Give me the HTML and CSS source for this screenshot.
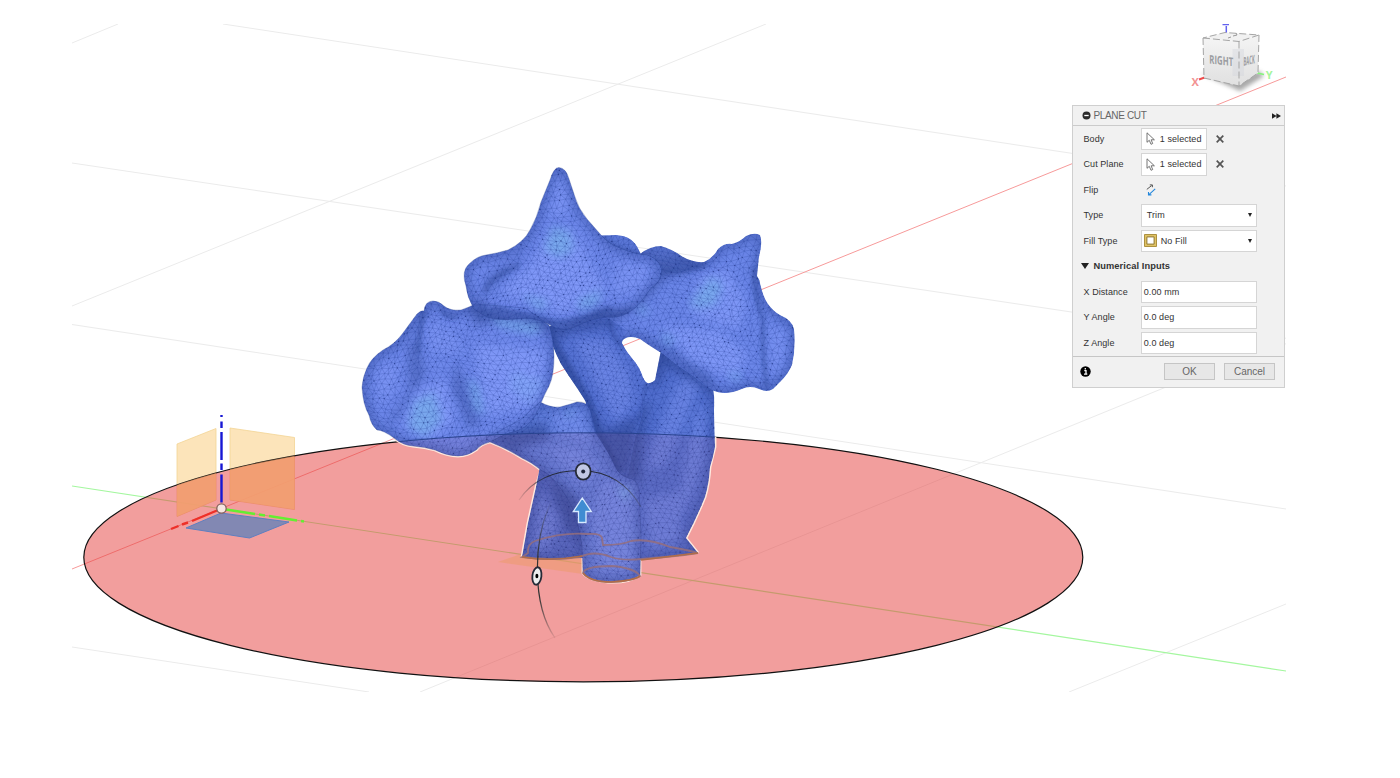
FILE: index.html
```html
<!DOCTYPE html>
<html lang="en">
<head>
<meta charset="utf-8">
<title>Plane Cut</title>
<link rel="stylesheet" href="styles.css">
</head>
<body>
<main class="workspace">
<svg class="scene" viewBox="72 24 1214 668" aria-label="Model viewport">
  <defs>
    <filter id="soft" x="-60%" y="-60%" width="220%" height="220%"><feGaussianBlur stdDeviation="5"/></filter>
    <filter id="glow" x="-80%" y="-80%" width="260%" height="260%"><feGaussianBlur stdDeviation="4"/></filter>
    <filter id="tight" x="-60%" y="-60%" width="220%" height="220%"><feGaussianBlur stdDeviation="2.2"/></filter>
    <path id="back" d="M590 236Q604 235 617 235Q633 236 639 250L642 256L640 290L590 280Z"/>
    <path id="rightTrunk" d="M586 400L645 382Q650 385 655 380L661 350L690 350L712 385Q715 393 714 410L715 447Q713 458 710 467Q709 484 705 497Q696 519 686 538L698 553Q670 557 641 559L575 558Z"/>
    <path id="rightLobe" d="M640 254Q650 246 661 246Q672 249 683 257Q694 263 704 262Q713 258 718 249Q724 243 732 244Q741 241 746 236Q754 232 760 235Q763 242 759 257L757 276Q760 280 760 283Q763 297 768 304Q773 311 780 315Q792 320 794 329Q796 348 792 365Q788 374 782 380L773 389Q767 393 759 389Q750 385 742 389Q726 396 714 391Q704 386 694 377Q678 367 663 354Q648 345 640 339Q628 334 622 341L600 330L590 315L610 270Z"/>
    <path id="centerTrunk" d="M547 327L575 319L605 316L626 330L622 343Q626 351 632 358Q640 367 643 377Q646 384 650 384Q644 393 645 402Q642 420 636 435L628 476L617 473L606 450L596 433L590 410Q584 398 577 388Q568 375 561 364Q551 345 547 327Z"/>
    <path id="rearLeg" d="M540 466L536 487L528 523L522 557Q540 561 563 559Q573 559 583 555L590 500L560 465Z"/>
    <path id="frontLeg" d="M486 438L520 420L540 402Q551 408 560 407Q571 404 577 402Q583 402 586 404L590 410L595 432Q609 452 617 470Q620 475 628 478Q637 479 639 489L641 535L640 575Q629 583 608 582Q588 580 583 573L582 545Q579 526 573 509Q563 488 548 474L541 470Q531 462 522 458Q506 448 490 442Z"/>
    <path id="leftLobe" d="M424 311Q425 301 433 301Q439 301 444 306Q450 311 461 310Q470 307 475 304L525 308L549 325Q554 340 554 356Q554 376 549 386Q543 397 540 406Q532 425 519 430Q505 433 490 442Q481 444 476 450Q468 456 458 456Q447 456 435 450Q425 447 413 446Q402 445 394 438Q383 430 377 430Q371 425 369 415Q363 405 362 387Q363 376 367 368Q371 358 383 350Q395 344 403 333Q411 322 417 314Q421 310 424 311Z"/>
    <path id="topLobe" d="M559 167.500Q566 168 569 179L575 197Q578 208 587 219Q594 227 601 235Q610 245 620 248Q637 255 647 255Q656 258 660 265Q664 275 657 283Q649 289 646 295Q640 303 635 308Q622 319 607 317Q590 319 579 325Q562 334 550 325Q535 316 515 319Q499 321 487 317Q480 313 474 309Q467 297 466 286Q461 271 469 264Q477 256 486 255Q498 253 508 250Q524 242 530 230Q537 218 541 202L550 180Q554 167 559 167.500Z"/>
    <clipPath id="cBack"><use href="#back"/></clipPath><clipPath id="cRt"><use href="#rightTrunk"/></clipPath>
    <clipPath id="cRl"><use href="#rightLobe"/></clipPath><clipPath id="cCt"><use href="#centerTrunk"/></clipPath>
    <clipPath id="cRear"><use href="#rearLeg"/></clipPath><clipPath id="cFl"><use href="#frontLeg"/></clipPath>
    <clipPath id="cLl"><use href="#leftLobe"/></clipPath><clipPath id="cTl"><use href="#topLobe"/></clipPath>
    <clipPath id="body"><use href="#back"/><use href="#rightTrunk"/><use href="#rightLobe"/><use href="#centerTrunk"/><use href="#rearLeg"/><use href="#frontLeg"/><use href="#leftLobe"/><use href="#topLobe"/></clipPath>
    <clipPath id="disc"><ellipse cx="583.300" cy="557.300" rx="499.500" ry="124.500"/></clipPath>
    <linearGradient id="fadeArc" gradientUnits="userSpaceOnUse" x1="519" y1="0" x2="642" y2="0"><stop offset="0" stop-color="#333" stop-opacity=".1"/><stop offset=".25" stop-color="#252b3c"/><stop offset=".7" stop-color="#252b3c"/><stop offset="1" stop-color="#333" stop-opacity=".2"/></linearGradient>
    <linearGradient id="fadeSide" gradientUnits="userSpaceOnUse" x1="0" y1="500" x2="0" y2="638"><stop offset="0" stop-color="#333" stop-opacity="0"/><stop offset=".4" stop-color="#333"/><stop offset=".7" stop-color="#333"/><stop offset="1" stop-color="#333" stop-opacity=".1"/></linearGradient>
    <linearGradient id="cubeFront" x1="0" y1="0" x2="0" y2="1"><stop offset="0" stop-color="#f4f4f4"/><stop offset="1" stop-color="#e0e0e0"/></linearGradient>
  </defs>

  <g class="grid">
    <path d="M72 43L118 24M72 306L766 24M420 692L1286 338M1069 692L1286 604M223 24L1286 186M72 163L1286 344M72 324.500L1286 509M72 647L369 692"/>
  </g>
  <path class="axis-red" d="M72 569L1286 77"/>
  <path class="axis-green" d="M72 486L1286 671"/>
  <path class="origin-plane" d="M177 444L216 428.500V500L177 516.500ZM230 428L294.500 437.500V509.500L230 500Z"/>
  <ellipse class="cut-plane" cx="583.300" cy="557.300" rx="499.500" ry="124.500"/>
  <path class="origin-hatch" clip-path="url(#disc)" d="M177 444L216 428.500V500L177 516.500ZM230 428L294.500 437.500V509.500L230 500Z"/>
  <path class="ground-plane" d="M221 513L289 522L249.500 538L186 528Z"/>
  <g class="triad">
    <path class="triad-blue" d="M221.500 415v2M221.500 421.500v6.500M221.500 432v28M221.500 463.500v6.500M221.500 474.500v28"/>
    <path class="triad-red" d="M217 510.500L192 521M188 522.500L182 524.500M178.500 526L171 529"/>
    <path class="triad-green" d="M226 509.500L255 514M259 514.500L265 515.500M269 516L297 520.500M301 521L304 521.500"/>
    <circle class="origin" cx="221.500" cy="508.500" r="4.700"/>
  </g>
  <path class="cut-hint" d="M498 562L524 553L582 556L583 574Z"/>
  <path class="halo" d="M394 438Q402 445 413 446Q425 447 435 450Q447 456 458 456Q468 456 476 450Q481 444 490 442Q506 448 522 458Q531 462 541 470L536 487L528 523L522 557M583 558V573Q588 580 608 582Q629 583 640 575V560M698 553L686 538Q696 519 705 497Q709 484 710 467L715 447V437"/>

  <g clip-path="url(#cBack)"><use href="#back" fill="#5a76d6"/><path class="crease" d="M600 236Q617 252 650 256"/></g>
  <g clip-path="url(#cRt)">
    <use href="#rightTrunk" fill="#526fcf"/><use href="#rightTrunk" class="edge mild"/>
    <path class="dark" d="M598 425L650 402L644 430L640 485L610 475Z"/>
    <path class="dark" d="M655 345L690 355L720 400L698 386L665 365L655 390Z"/>
    <path class="light faint" d="M680 378L699 384L684 425L666 465L646 470L660 425Z"/>
    <path class="light faint" d="M693 420L705 400L704 460L690 500L675 520Z"/>
    <path class="light faint" d="M645 500L680 490L680 540L650 550Z"/>
  </g>
  <g clip-path="url(#cRl)">
    <use href="#rightLobe" fill="#6b86e8"/><use href="#rightLobe" class="edge"/>
    <path class="dark" d="M640 252L700 260L705 266L665 278L640 305L615 322L590 320Z"/>
    <path class="dark faint" d="M623 330L665 348L715 392L710 375L670 346Z"/>
    <path class="crease" d="M755 267Q753 295 763 320Q762 355 767 388"/>
    <path class="crease" d="M662 271Q686 273 706 263"/>
    <path class="light" d="M700 275L728 270L745 300L740 330L695 318L690 308Z"/><path class="cyan" d="M711 277L723 285L714 306L695 308L690 303Z"/>
    <path class="light" d="M660 325L720 330L748 355L735 380L690 360Z"/>
    <path class="light faint" d="M770 325L787 332L783 365L771 377Z"/>
    <path class="cyan" d="M660 333L676 339L667 346ZM727 374L741 373L738 382ZM637 306L650 309L641 316Z"/>
  </g>
  <g clip-path="url(#cCt)">
    <use href="#centerTrunk" fill="#5672d3"/>
    <path class="crease wide" d="M547 320L550 340L586 401L596 433L617 474"/>
    <path class="dark" d="M545 320L625 315L612 326L570 332L555 345Z"/>
    <path class="light faint" d="M575 340L605 340L627 370L633 400L618 425L597 385Z"/>
    <path class="crease" d="M609 322Q611 335 624 348"/>
    <path class="dark" d="M590 400L605 430L640 415L630 480L607 465Z"/>
    <path class="crease" d="M646 383Q648 400 638 420"/>
  </g>
  <g clip-path="url(#cRear)"><use href="#rearLeg" fill="#5069c5"/><use href="#rearLeg" class="edge mild"/><path class="dark" d="M545 468L581 510L584 550L566 528Z"/><path class="light faint" d="M540 490L560 520L548 552L532 545Z"/></g>
  <g clip-path="url(#cFl)">
    <use href="#frontLeg" fill="#607ddb"/><use href="#frontLeg" class="edge mild"/>
    <path class="dark" d="M485 434L545 422L550 438L515 450L580 500L583 540L552 480Z"/>
    <path class="light faint" d="M602 480L632 485L632 570L600 572L592 520Z"/>
    <path class="light faint" d="M550 412L583 410L592 445L557 435Z"/>
    <path class="light faint" d="M547 445L585 450L600 475L580 485Z"/>
    <path class="cyan" d="M565 412L577 410L568 418ZM616 488L630 489L627 503Z"/>
  </g>
  <g clip-path="url(#cLl)">
    <use href="#leftLobe" fill="#6e88ea"/><use href="#leftLobe" class="edge"/>
    <path class="dark" d="M466 302L480 300L515 312L549 320L549 332L510 319L475 325Z"/>
    <path class="dark faint" d="M423 307L417 340L425 375L398 418L384 428L410 390L408 350Z"/>
    <path class="crease" d="M424 310Q419 331 418 354M457 317Q447 318 440 310"/>
    <path class="dark faint" d="M455 360L466 385L480 422L470 430L452 390Z"/>
    <path class="light" d="M418 390L445 380L455 420L430 440L403 424Z"/><path class="cyan" d="M414 402L434 392L442 420L425 437L408 427Z"/>
    <path class="cyan" d="M468 378L479 385L486 415L475 410ZM512 370L542 381L530 403L509 389ZM490 317L541 325L537 335L500 327Z"/>
    <path class="light" d="M475 345L545 350L538 405L485 415Z"/>
    <path class="light faint" d="M375 370L400 360L395 390L380 405Z"/>
    <path class="light faint" d="M430 320L455 335L460 355L430 350Z"/>
  </g>
  <g clip-path="url(#cTl)">
    <use href="#topLobe" fill="#6e88ea"/><use href="#topLobe" class="edge"/>
    <path class="dark faint" d="M531 240L517 264L492 287L475 310L489 276L515 259Z"/>
    <path class="dark" d="M475 300L500 312L554 328L585 318L600 309L639 309L630 325L550 339L475 318Z"/>
    <path class="crease" d="M520 265Q509 270 501 274Q487 282 485 292M612 308Q583 321 554 323Q530 316 493 308"/>
    <path class="light" d="M551 230L572 230L606 291L565 313L500 293L530 265Z"/><path class="cyan" d="M553 226L570 232L573 250L560 258L544 250ZM578 300L602 290L597 304L580 311ZM521 294L548 302L541 311Z"/>
    <path class="light faint" d="M617 262L650 265L643 290L612 294Z"/>
    <path class="light faint" d="M555 180L564 180L570 210L550 220Z"/>
  </g>
  <g clip-path="url(#body)"><path id="wire" class="wire"/><path id="verts" class="verts"/></g>
  <g class="outlines"><use href="#leftLobe"/><use href="#topLobe"/><use href="#frontLeg"/></g>
  <g clip-path="url(#body)"><ellipse class="plane-over-body" cx="583.300" cy="557.300" rx="499.500" ry="124.500"/></g>

  <path class="section" d="M522 557L528 553Q527 544 535 541Q562 532 588 534Q601 533 602 538L603 545Q622 545 631 541Q648 538 670 547Q688 550 698 553Q671 557 641 559Q623 561 611 557Q594 550 580 557Q552 561 522 557Z"/>
  <path class="section" d="M583 573Q585 566 612 566Q635 568 640 576Q633 581 611 582Q590 582 583 573Z"/>
  <path class="section-base" d="M522 557Q552 562 582 556M583 573Q590 582 611 582Q633 581 640 576M641 560L698 553"/>

  <path class="arc" stroke="url(#fadeArc)" d="M519 500Q539 470 582 470.500Q621 472 641 507"/>
  <path class="arc" stroke="url(#fadeSide)" d="M552 500C532 540 532 605 555 638"/>
  <ellipse class="handle top-handle" cx="583.200" cy="471.500" rx="7.400" ry="8.200"/><circle cx="583.200" cy="471.500" r="2" fill="#20263b"/>
  <ellipse class="handle" cx="536.900" cy="576" rx="4.500" ry="8.800" transform="rotate(7 537 576)"/><ellipse cx="536.900" cy="576" rx="1.500" ry="2.300"/>
  <path class="lift" d="M582.300 498L591.300 511.500H586V522.500H578.500V511.500H573.300Z"/>

  <g class="cube">
    <path class="cube-shadow" d="M1200 73L1240 91L1264 76L1259 71L1238 79Z"/>
    <path class="axis-x" d="M1199 79.500L1206 77"/><path class="axis-y" d="M1257 73L1264 74.500"/><path class="axis-z" d="M1226.300 26V33M1222.500 24.500H1229"/>
    <path d="M1203 38L1239 41.500V86L1204 78Z" fill="url(#cubeFront)"/>
    <path d="M1239 41.500L1259 35L1258 73L1239 86Z" fill="url(#cubeFront)"/>
    <path d="M1203 38L1225 32.500L1259 35L1239 41.500Z" fill="#f1f1f1"/>
    <path d="M1232.500 49H1244V76H1232.500Z" fill="#cfd2da" opacity=".35"/>
    <path class="cube-dash" d="M1203 38L1239 41.500L1259 35L1225 32.500ZM1203 38L1204 78L1239 86L1258 73L1259 35M1239 41.500V86"/>
    <path class="top-mark" d="M1228 38l3-1M1233 36l4-1M1237 35l-1-2"/>
    <text class="cube-text" transform="matrix(1 .11 .01 1 1209.300 63.500)" textLength="24" lengthAdjust="spacingAndGlyphs">RIGHT</text>
    <text class="cube-text" transform="matrix(.8 -.2 0 1 1243.500 66)" textLength="14" lengthAdjust="spacingAndGlyphs">BACK</text>
    <text class="axis-label red" x="1191.500" y="86">X</text><text class="axis-label green" x="1265.700" y="79">Y</text>
  </g>
</svg>

<section class="dialog">
  <header class="dialog-head">
    <svg class="dot" viewBox="0 0 9 9"><circle cx="4.500" cy="4.500" r="4" fill="#2b2b2b"/><path d="M2.300 4.500H6.700" stroke="#fff" stroke-width="1.300"/></svg>
    <span class="title">PLANE CUT</span>
    <svg class="forward" viewBox="0 0 9 6"><path d="M0 .3L4.600 3L0 5.700ZM4.400 .3L9 3L4.400 5.700Z" fill="#222"/></svg>
  </header>
  <div class="rows">
    <div class="row"><label>Body</label><div class="pick"><svg viewBox="0 0 9 13"><path d="M1 .8V10.300L3.300 8.300L5 12.300L6.700 11.500L5.100 7.800H8.400Z"/></svg><span>1 selected</span></div><svg class="clear" viewBox="0 0 8 8"><path d="M.7 .7L7.300 7.300M7.300 .7L.7 7.300"/></svg></div>
    <div class="row"><label>Cut Plane</label><div class="pick"><svg viewBox="0 0 9 13"><path d="M1 .8V10.300L3.300 8.300L5 12.300L6.700 11.500L5.100 7.800H8.400Z"/></svg><span>1 selected</span></div><svg class="clear" viewBox="0 0 8 8"><path d="M.7 .7L7.300 7.300M7.300 .7L.7 7.300"/></svg></div>
    <div class="row"><label>Flip</label><svg class="flip" viewBox="0 0 10 12"><path d="M.8 5.400L5.600 1.600M3.800 .9H6.400V3.200" stroke="#444" stroke-width=".9"/><path d="M9.200 4.800L3.200 10.300M2.500 8V10.900H5.400" stroke="#2387dc" stroke-width="1.100"/></svg></div>
    <div class="row"><label>Type</label><div class="field select"><span>Trim</span><i></i></div></div>
    <div class="row"><label>Fill Type</label><div class="field select fill"><svg class="swatch" viewBox="0 0 13 13"><path d="M.5 .5H12.500V12.500H.5Z" fill="#dfc264" stroke="#ad9140"/><path d="M2.900 2.900H10.100V10.100H2.900Z" fill="#fff" stroke="#8f7730"/></svg><span>No Fill</span><i></i></div></div>
    <div class="row group"><i></i><b>Numerical Inputs</b></div>
    <div class="row"><label>X Distance</label><div class="field">0.00 mm</div></div>
    <div class="row"><label>Y Angle</label><div class="field">0.0 deg</div></div>
    <div class="row"><label>Z Angle</label><div class="field">0.0 deg</div></div>
  </div>
  <footer class="dialog-foot">
    <svg class="info" viewBox="0 0 11 11"><circle cx="5.500" cy="5.500" r="5.200"/><path d="M4.300 4.700H6V8M4 8.200H7.300M5.300 2V3.500" stroke="#fff" stroke-width="1.300" fill="none"/></svg>
    <button>OK</button><button>Cancel</button>
  </footer>
</section>
</main>
<script src="mesh.js"></script>
</body>
</html>
```
FILE: styles.css
```css
* { box-sizing: border-box; }
body { margin: 0; background: #fff; font-family: "Liberation Sans", Arial, sans-serif; }
.workspace { position: relative; width: 1400px; height: 778px; padding: 24px 114px 86px 72px; overflow: hidden; }
.scene { display: block; width: 1214px; height: 668px; overflow: hidden; }
.grid { fill: none; stroke: #ebebeb; stroke-width: 1; }
.axis-red { stroke: #f79a9a; stroke-width: 1; }
.axis-green { stroke: #a4f79f; stroke-width: 1.2; }
.origin-plane { fill: #fbdfae; fill-opacity: .85; stroke: #f3d494; stroke-width: .8; }
.cut-plane { fill: #e63e3c; fill-opacity: .5; stroke: #111; stroke-width: 1.2; }
.origin-hatch { fill: #f3ac6c; opacity: .5; }
.ground-plane { fill: #8288b3; stroke: #5f7fc0; stroke-width: 1; }
.triad { fill: none; stroke-width: 2.4; }
.triad-blue { stroke: #1717d4; }
.triad-red { stroke: #ee3028; }
.triad-green { stroke: #64ee32; }
.origin { fill: #f6e5e2; stroke: #84605b; stroke-width: 1.3; }
.cut-hint { fill: #ed9a6b; opacity: .55; }
.halo { fill: none; stroke: #ffe9df; stroke-width: 2.8; stroke-linejoin: round; }
.edge { fill: none; stroke: #304b9f; stroke-width: 9; opacity: .55; filter: url(#soft); }
.mild { stroke-width: 6; opacity: .6; }
.dark { fill: #29438f; opacity: .55; filter: url(#soft); }
.light { fill: #8aa1ff; opacity: .62; filter: url(#soft); }
.cyan { fill: #77adea; opacity: .75; filter: url(#glow); }
.faint { opacity: .38; }
.crease { fill: none; stroke: #263f8d; stroke-width: 3; opacity: .6; filter: url(#tight); }
.crease.wide { stroke-width: 12; opacity: .6; }
.wire { fill: none; stroke: #233c92; stroke-width: .5; opacity: .4; }
.verts { fill: none; stroke: #182c76; stroke-width: 1.2; stroke-linecap: round; opacity: .6; }
.outlines { fill: none; stroke: #263f8f; stroke-width: .8; opacity: .4; }
.plane-over-body { fill: #b0506f; fill-opacity: .1; stroke: #29438e; stroke-width: 1; }
.section { fill: none; stroke: #956e7d; stroke-width: 1.8; opacity: .85; }
.section-base { fill: none; stroke: #b06d48; stroke-width: 1.6; }
.arc { fill: none; stroke-width: 1.2; }
.handle { fill: #eee; stroke: #252a37; stroke-width: 1.8; }
.top-handle { fill: #c2c8e5; }
.lift { fill: #408cd2; stroke: #d8eaff; stroke-width: 1.3; }
.cube-shadow { fill: #555; opacity: .5; filter: url(#tight); }
.axis-x { stroke: #ef4b4b; stroke-width: 2; }
.axis-y { stroke: #84f47a; stroke-width: 1.6; }
.axis-z { stroke: #6262ef; stroke-width: 1.5; }
.cube-dash { fill: none; stroke: #a5a5a5; stroke-width: 1; stroke-dasharray: 7 3; }
.top-mark { fill: none; stroke: #999; stroke-width: 1; }
.cube-text { fill: #9b9da1; font: bold 12px "Open Sans", sans-serif; }
.axis-label { font: bold 11px "Open Sans", sans-serif; }
.red { fill: #f29292; }
.green { fill: #a6f59d; }

.dialog { position: absolute; left: 1072px; top: 105px; width: 213px; height: 282.500px; background: #f1f1f1; border: 1px solid #cfcfcf; color: #333; font-size: 9px; letter-spacing: .07px; }
.dialog-head { display: flex; align-items: center; height: 20px; padding: 0 3px 0 9px; border-bottom: 1px solid #cbcbcb; }
.dot { width: 9px; height: 9px; margin-right: 2.500px; }
.title { flex: 1; color: #666; font-size: 10px; letter-spacing: -.35px; }
.forward { width: 9px; height: 6px; }
.rows { height: 230px; }
.row { display: flex; align-items: center; height: 25.500px; padding-left: 10.500px; }
.row label { width: 57.300px; white-space: nowrap; }
.pick, .field { display: flex; align-items: center; height: 22.500px; background: #fff; border: 1px solid #d5d5d5; }
.pick { width: 66px; padding-left: 4.500px; }
.pick svg { width: 9px; height: 13px; margin-right: 4.500px; fill: #fff; stroke: #666; stroke-width: .9; }
.clear { width: 8px; height: 8px; margin-left: 9.500px; stroke: #555; stroke-width: 1.700; }
.field { width: 116px; padding-left: 2px; }
.select { padding: 0 4px 0 5px; }
.select span { flex: 1; }
.select i { border: 2.500px solid transparent; border-width: 4px 2.500px 0; border-top-color: #222; }
.fill { padding-left: 2px; }
.swatch { width: 13px; height: 13px; margin-right: 4px; }
.flip { width: 10px; height: 12px; margin-left: 5px; fill: none; }
.group { padding-left: 8px; }
.group i { border: 4px solid transparent; border-top: 6px solid #222; border-bottom: 0; margin-right: 4.500px; }
.group b { font-size: 9.300px; }
.dialog-foot { display: flex; align-items: center; height: 30.500px; padding: 0 9px 0 6.500px; border-top: 1px solid #c6c6c6; }
.info { width: 11px; height: 11px; margin-right: auto; }
.dialog-foot button { width: 51px; height: 17px; margin-left: 9px; padding: 0; background: #e7e7e7; border: 1px solid #c5c5c5; color: #666; font: 10px "Liberation Sans", Arial, sans-serif; }
```
FILE: mesh.js
```javascript
// Builds the triangulated surface from a jittered, gently warped lattice.
let seed = 71;
function random() {
  seed = (seed * 16807) % 2147483647;
  return seed / 2147483647;
}
const rows = [];
for (let r = 0; r < 88; r++) {
  const row = [];
  for (let c = 0; c < 82; c++) {
    const x = 350 + c * 5.6 + (r % 2) * 2.8 + (random() - 0.5) * 3.3;
    const y = 160 + r * 4.9 + (random() - 0.5) * 3;
    row.push([x + 4 * Math.sin(y / 19 + x / 41), y + 4 * Math.sin(x / 21 - y / 37)]);
  }
  rows.push(row);
}
let wire = "";
let verts = "";
const pt = p => p[0].toFixed(1) + " " + p[1].toFixed(1);
for (let r = 0; r < rows.length - 1; r++) {
  for (let c = 1; c < rows[r].length - 1; c++) {
    const p = rows[r][c];
    const below = rows[r + 1];
    wire += "M" + pt(rows[r][c + 1]) + "L" + pt(p) + "L" + pt(below[c]);
    wire += "M" + pt(p) + "L" + pt(below[c + (r % 2 ? 1 : -1)]);
    if (random() > 0.8) verts += "M" + pt(p) + "h.01";
  }
}
document.getElementById("wire").setAttribute("d", wire);
document.getElementById("verts").setAttribute("d", verts);
```
